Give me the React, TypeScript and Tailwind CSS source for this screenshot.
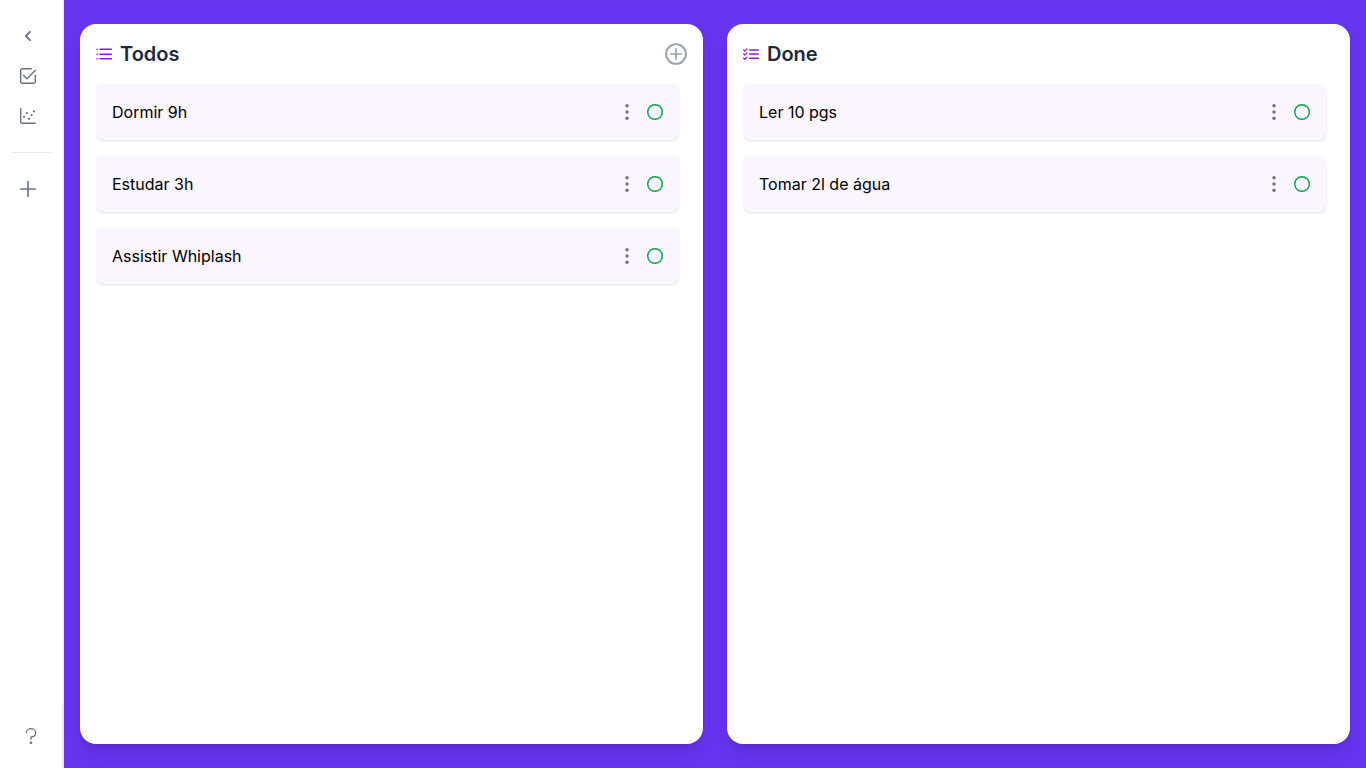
import type { ReactNode } from 'react';

type IconProps = { className?: string };

function Icon({ className = 'size-4', children }: IconProps & { children: ReactNode }) {
  return (
    <svg
      viewBox="0 0 16 16"
      className={className}
      fill="none"
      stroke="currentColor"
      strokeWidth="1.4"
      strokeLinecap="round"
      strokeLinejoin="round"
      aria-hidden="true"
    >
      {children}
    </svg>
  );
}

const ChevronLeft = () => (
  <Icon>
    <path d="M10 3.8 5.8 8l4.2 4.2" strokeWidth="1.8" />
  </Icon>
);

const CheckSquare = () => (
  <Icon>
    <path d="M11.2.7H2.2A1.5 1.5 0 0 0 .7 2.2v11.6a1.5 1.5 0 0 0 1.5 1.5h11.6a1.5 1.5 0 0 0 1.5-1.5V7.3" />
    <path d="M3.6 7.5 7 10.8l8.3-8.3" />
  </Icon>
);

const ChartScatter = () => (
  <Icon>
    <path d="M.7.7v13.4a1.2 1.2 0 0 0 1.2 1.2h13.4" />
    <g fill="currentColor" stroke="none">
      <circle cx="4" cy="8.8" r="1.1" />
      <circle cx="6.7" cy="5" r="1.1" />
      <circle cx="9" cy="10.8" r="1.1" />
      <circle cx="11.6" cy="7" r="1.1" />
      <circle cx="14" cy="3.4" r="1.1" />
    </g>
  </Icon>
);

const Plus = () => (
  <Icon>
    <path d="M8 .7v14.6M.7 8h14.6" strokeWidth="1.6" />
  </Icon>
);

const Question = () => (
  <Icon>
    <path d="M3.4 4.8A4.5 4.2 0 0 1 8 .7c2.6 0 4.7 1.8 4.7 4.1 0 2.3-2 4-4.7 4.2v2.3" strokeWidth="1.3" />
    <circle cx="8" cy="14.7" r="1.3" fill="currentColor" stroke="none" />
  </Icon>
);

const PlusCircle = () => (
  <Icon className="size-[22px]">
    <circle cx="8" cy="8" r="7.2" />
    <path d="M8 4.2v7.6M4.2 8h7.6" strokeWidth="1.2" />
  </Icon>
);

const List = () => (
  <Icon>
    <path d="M4 3.5h11.3M4 8.5h11.3M4 13h11.3M1 3.5h.2M1 8.5h.2M1 13h.2" transform="translate(0 -.2)" strokeWidth="1.5" />
  </Icon>
);

const ListCheck = () => (
  <Icon>
    <path d="M6.7 4h8.6M6.7 8h8.6M6.7 12.3h8.6" strokeWidth="1.5" />
    <path d="m.7 4 1.2 1.1 2-2.2M.7 8l1.2 1.1 2-2.2M.7 12.2l1.2 1.1 2-2.2" strokeWidth="1.3" />
  </Icon>
);

const EllipsisV = () => (
  <Icon>
    <g fill="currentColor" stroke="none">
      <circle cx="8" cy="1.7" r="1.7" />
      <circle cx="8" cy="8" r="1.7" />
      <circle cx="8" cy="14.3" r="1.7" />
    </g>
  </Icon>
);

const Circle = () => (
  <Icon>
    <circle cx="8" cy="8" r="7.3" />
  </Icon>
);

function NavButton({ label, children }: { label: string; children: ReactNode }) {
  return (
    <button type="button" aria-label={label} className="flex size-8 items-center justify-center rounded-md">
      {children}
    </button>
  );
}

function Sidebar() {
  return (
    <aside className="flex w-16 shrink-0 flex-col border-r border-gray-200 bg-white text-gray-500">
      <nav className="flex grow flex-col gap-2 px-3 pt-5">
        <NavButton label="Recolher menu"><ChevronLeft /></NavButton>
        <NavButton label="Tarefas"><CheckSquare /></NavButton>
        <NavButton label="Gráficos"><ChartScatter /></NavButton>
        <hr className="my-3 border-gray-200" />
        <NavButton label="Adicionar"><Plus /></NavButton>
      </nav>
      <div className="flex h-16 items-center justify-center border-r border-gray-200">
        <button type="button" aria-label="Ajuda"><Question /></button>
      </div>
    </aside>
  );
}

function TaskCard({ title }: { title: string }) {
  return (
    <li className="flex h-14 items-center gap-3 rounded-lg bg-purple-50 px-4 shadow-sm">
      <span className="grow text-base text-black">{title}</span>
      <button type="button" aria-label={`Opções de ${title}`} className="text-gray-500"><EllipsisV /></button>
      <button type="button" aria-label={`Alternar ${title}`} className="text-green-600"><Circle /></button>
    </li>
  );
}

function Column({ title, icon, action, tasks }: { title: string; icon: ReactNode; action?: ReactNode; tasks: string[] }) {
  return (
    <section className="flex flex-1 flex-col gap-4 rounded-2xl bg-white p-4 shadow-lg">
      <header className="flex h-7 items-center justify-between">
        <h2 className="flex items-center gap-2 text-xl font-semibold text-slate-800">
          <span className="text-purple-600">{icon}</span>
          {title}
        </h2>
        {action}
      </header>
      <ul className="flex grow flex-col gap-4 overflow-y-auto pr-2">
        {tasks.map((task) => <TaskCard key={task} title={task} />)}
      </ul>
    </section>
  );
}

export default function App() {
  return (
    <div className="flex min-h-screen bg-[#6633ee] font-[Inter,sans-serif]">
      <Sidebar />
      <main className="flex grow gap-6 px-4 py-6">
        <Column
          title="Todos"
          icon={<List />}
          action={<button type="button" aria-label="Adicionar tarefa" className="text-gray-400"><PlusCircle /></button>}
          tasks={['Dormir 9h', 'Estudar 3h', 'Assistir Whiplash']}
        />
        <Column title="Done" icon={<ListCheck />} tasks={['Ler 10 pgs', 'Tomar 2l de água']} />
      </main>
    </div>
  );
}
